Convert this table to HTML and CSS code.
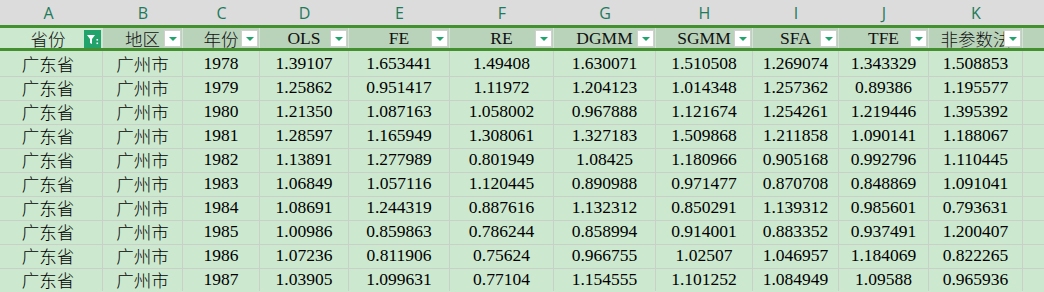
FILE: index.html
```html
<!DOCTYPE html>
<html lang="zh-CN">
<head>
  <meta charset="UTF-8">
  <title>面板数据</title>
  <link rel="stylesheet" href="styles.css">
</head>
<body>
  <div class="sheet">
    <!-- column letters -->
    <div class="row letters">
      <div>A</div><div>B</div><div>C</div><div>D</div><div>E</div><div>F</div>
      <div>G</div><div>H</div><div>I</div><div>J</div><div>K</div><div></div>
    </div>

    <!-- header row with filter buttons -->
    <div class="row head">
      <div class="cell first">省份<span class="filter on"><svg width="17" height="18" viewBox="0 0 17 18"><path d="M3 5h8l-3 4v5l-2-1v-4z" fill="#fff"/><rect x="12.5" y="9" width="1.6" height="1.6" fill="#fff"/><rect x="12.5" y="12.5" width="1.6" height="1.6" fill="#fff"/></svg></span></div>
      <div class="cell">地区<span class="filter"></span></div>
      <div class="cell">年份<span class="filter"></span></div>
      <div class="cell">OLS<span class="filter"></span></div>
      <div class="cell">FE<span class="filter"></span></div>
      <div class="cell">RE<span class="filter"></span></div>
      <div class="cell">DGMM<span class="filter"></span></div>
      <div class="cell">SGMM<span class="filter"></span></div>
      <div class="cell">SFA<span class="filter"></span></div>
      <div class="cell">TFE<span class="filter"></span></div>
      <div class="cell">非参数法<span class="filter"></span></div>
      <div class="cell"></div>
    </div>

    <div class="row data"><div>广东省</div><div>广州市</div><div>1978</div><div>1.39107</div><div>1.653441</div><div>1.49408</div><div>1.630071</div><div>1.510508</div><div>1.269074</div><div>1.343329</div><div>1.508853</div><div></div></div>
    <div class="row data"><div>广东省</div><div>广州市</div><div>1979</div><div>1.25862</div><div>0.951417</div><div>1.11972</div><div>1.204123</div><div>1.014348</div><div>1.257362</div><div>0.89386</div><div>1.195577</div><div></div></div>
    <div class="row data"><div>广东省</div><div>广州市</div><div>1980</div><div>1.21350</div><div>1.087163</div><div>1.058002</div><div>0.967888</div><div>1.121674</div><div>1.254261</div><div>1.219446</div><div>1.395392</div><div></div></div>
    <div class="row data"><div>广东省</div><div>广州市</div><div>1981</div><div>1.28597</div><div>1.165949</div><div>1.308061</div><div>1.327183</div><div>1.509868</div><div>1.211858</div><div>1.090141</div><div>1.188067</div><div></div></div>
    <div class="row data"><div>广东省</div><div>广州市</div><div>1982</div><div>1.13891</div><div>1.277989</div><div>0.801949</div><div>1.08425</div><div>1.180966</div><div>0.905168</div><div>0.992796</div><div>1.110445</div><div></div></div>
    <div class="row data"><div>广东省</div><div>广州市</div><div>1983</div><div>1.06849</div><div>1.057116</div><div>1.120445</div><div>0.890988</div><div>0.971477</div><div>0.870708</div><div>0.848869</div><div>1.091041</div><div></div></div>
    <div class="row data"><div>广东省</div><div>广州市</div><div>1984</div><div>1.08691</div><div>1.244319</div><div>0.887616</div><div>1.132312</div><div>0.850291</div><div>1.139312</div><div>0.985601</div><div>0.793631</div><div></div></div>
    <div class="row data"><div>广东省</div><div>广州市</div><div>1985</div><div>1.00986</div><div>0.859863</div><div>0.786244</div><div>0.858994</div><div>0.914001</div><div>0.883352</div><div>0.937491</div><div>1.200407</div><div></div></div>
    <div class="row data"><div>广东省</div><div>广州市</div><div>1986</div><div>1.07236</div><div>0.811906</div><div>0.75624</div><div>0.966755</div><div>1.02507</div><div>1.046957</div><div>1.184069</div><div>0.822265</div><div></div></div>
    <div class="row data"><div>广东省</div><div>广州市</div><div>1987</div><div>1.03905</div><div>1.099631</div><div>0.77104</div><div>1.154555</div><div>1.101252</div><div>1.084949</div><div>1.09588</div><div>0.965936</div><div></div></div>
  </div>
</body>
</html>
```

FILE: styles.css
```css
* {
  box-sizing: border-box;
}

body {
  margin: 0;
  background-color: #cce8cf;
  overflow: hidden;
  font-family: 'Liberation Serif', 'Noto Sans CJK SC', serif;
  font-weight: 300;
}

.sheet {
  margin-left: -6px;
  width: 1056px;
}

.row {
  display: grid;
  grid-template-columns: 109px 80px 77px 89px 101px 104px 102px 97px 86px 90px 94px 1fr;
}

/* A B C ... band */
.letters {
  height: 25px;
  background-color: #dcdcdc;
  font-family: 'Open Sans', 'Liberation Sans', sans-serif;
  font-weight: 400;
  font-size: 16px;
  color: #1d7a5a;
}

.letters div {
  display: flex;
  align-items: center;
  justify-content: center;
  padding-top: 1px;
}

.head {
  height: 26px;
  border-top: 3px solid #43902f;
  border-bottom: 3px solid #43902f;
  background-color: #b9d3ba;
  font-size: 17.5px;
  color: #111;
}

.head .cell {
  position: relative;
  display: flex;
  align-items: center;
  justify-content: center;
  border-right: 1px solid #d6e2d6;
  overflow: hidden;
  white-space: nowrap;
}

.head .first {
  background-color: #cce8cf;
}

.filter {
  position: absolute;
  right: 1px;
  top: 2px;
  width: 17px;
  height: 17px;
  background-color: #fff;
  border: 1px solid #d0d0d0;
}

.filter::after {
  content: '';
  position: absolute;
  left: 4px;
  top: 6px;
  border-left: 4px solid transparent;
  border-right: 4px solid transparent;
  border-top: 4px solid #1fa56c;
}

.filter.on {
  top: 2px;
  height: 18px;
  border: none;
  background-color: #21a36b;
}

.filter.on::after {
  display: none;
}

.filter svg {
  display: block;
}

.data {
  height: 24px;
  font-size: 17.5px;
  color: #000;
}

.data div {
  display: flex;
  align-items: center;
  justify-content: center;
  border-right: 1px solid #c9cfc9;
  border-bottom: 1px solid #c9cfc9;
  white-space: nowrap;
}
```
